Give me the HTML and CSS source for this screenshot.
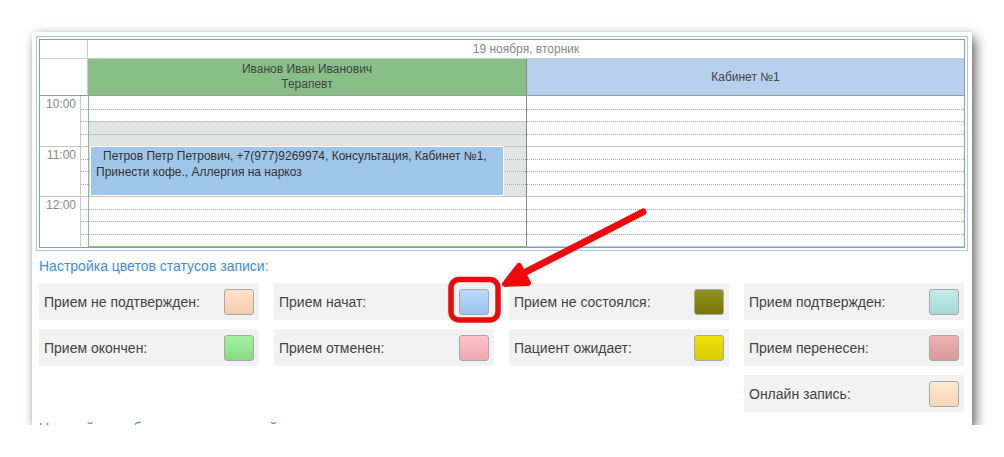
FILE: index.html
```html
<!DOCTYPE html>
<html lang="ru">
<head>
<meta charset="utf-8">
<title>Расписание</title>
<link rel="stylesheet" href="styles.css">
</head>
<body>
<div class="card">
  <div class="frame">
    <div class="sched">
      <div class="date-row">
        <div class="corner"></div>
        <div class="date">19 ноября, вторник</div>
      </div>
      <div class="head-row">
        <div class="corner"></div>
        <div class="head doctor">Иванов Иван Иванович<br>Терапевт</div>
        <div class="head room">Кабинет №1</div>
      </div>
      <div class="body-row">
        <div class="timecol">
          <div class="labels">
            <div class="hour">10:00</div>
            <div class="hour">11:00</div>
            <div class="hour">12:00</div>
          </div>
          <div class="ticks">
            <div class="slot"></div><div class="slot"></div><div class="slot"></div><div class="slot"></div>
            <div class="slot"></div><div class="slot"></div><div class="slot"></div><div class="slot"></div>
            <div class="slot"></div><div class="slot"></div><div class="slot"></div><div class="slot"></div>
          </div>
        </div>
        <div class="col doctor-col">
          <div class="slot"></div><div class="slot"></div><div class="slot busy"></div><div class="slot busy"></div>
          <div class="slot busy"></div><div class="slot busy"></div><div class="slot busy"></div><div class="slot busy"></div>
          <div class="slot"></div><div class="slot"></div><div class="slot"></div><div class="slot"></div>
          <div class="event"><span class="event-first">Петров Петр Петрович, +7(977)9269974, Консультация, Кабинет №1,</span><br>Принести кофе., Аллергия на наркоз</div>
        </div>
        <div class="col room-col">
          <div class="slot"></div><div class="slot"></div><div class="slot"></div><div class="slot"></div>
          <div class="slot"></div><div class="slot"></div><div class="slot"></div><div class="slot"></div>
          <div class="slot"></div><div class="slot"></div><div class="slot"></div><div class="slot"></div>
        </div>
      </div>
    </div>
  </div>
  <div class="settings">
    <div class="settings-title">Настройка цветов статусов записи:</div>
    <div class="status-grid">
      <div class="status"><span>Прием не подтвержден:</span><span class="swatch sw-unconfirmed"></span></div>
      <div class="status"><span>Прием начат:</span><span class="swatch sw-started"></span></div>
      <div class="status"><span>Прием не состоялся:</span><span class="swatch sw-missed"></span></div>
      <div class="status"><span>Прием подтвержден:</span><span class="swatch sw-confirmed"></span></div>
      <div class="status"><span>Прием окончен:</span><span class="swatch sw-finished"></span></div>
      <div class="status"><span>Прием отменен:</span><span class="swatch sw-cancelled"></span></div>
      <div class="status"><span>Пациент ожидает:</span><span class="swatch sw-waiting"></span></div>
      <div class="status"><span>Прием перенесен:</span><span class="swatch sw-moved"></span></div>
      <div class="status online"><span>Онлайн запись:</span><span class="swatch sw-online"></span></div>
    </div>
    <div class="settings-title next">Настройка отображения расписаний:</div>
  </div>
</div>
<svg class="annot" width="1004" height="457" viewBox="0 0 1004 457" xmlns="http://www.w3.org/2000/svg">
  <rect x="451" y="279.5" width="47" height="40.5" rx="8" ry="8" fill="none" stroke="#ee0a0a" stroke-width="5.5"/>
  <line x1="643" y1="212" x2="512" y2="279" stroke="#ee0a0a" stroke-width="7" stroke-linecap="round"/>
  <polygon points="519,266 505,284 528,283" fill="#ee0a0a" stroke="#ee0a0a" stroke-width="6" stroke-linejoin="round"/>
</svg>
</body>
</html>
```

FILE: styles.css
```css
html, body {
  margin: 0;
  padding: 0;
  background: #ffffff;
}

body {
  font-family: "Liberation Sans", Arial, sans-serif;
  color: #444444;
}

.card {
  margin: 32px 0 0 32px;
  width: 940px;
  height: 393px;
  box-sizing: border-box;
  padding: 4px 4px 0;
  background: #ffffff;
  overflow: hidden;
  box-shadow: 4px 6px 11px rgba(0, 0, 0, 0.55), 0 0 6px rgba(0, 0, 0, 0.12);
}

.frame {
  border: 1px solid #a9cdf0;
  padding: 2px;
}

.sched {
  border: 1px solid #999999;
  font-size: 12px;
}

.date-row {
  display: flex;
  height: 19px;
  box-sizing: border-box;
  border-bottom: 1px solid #cccccc;
}

.corner {
  width: 48px;
  flex: none;
  box-sizing: border-box;
  border-right: 1px solid #cccccc;
}

.date {
  flex: 1;
  text-align: center;
  line-height: 18px;
  color: #888888;
}

.head-row {
  display: flex;
  height: 37px;
  box-sizing: border-box;
  border-bottom: 1px solid #999999;
}

.head {
  text-align: center;
  color: #444444;
}

.doctor {
  width: 439px;
  flex: none;
  box-sizing: border-box;
  border-right: 1px solid #888888;
  background: #88bf87;
  line-height: 15px;
  padding-top: 3px;
}

.room {
  flex: 1;
  background: #b6d0ee;
  line-height: 36px;
}

.body-row {
  display: flex;
  height: 151px;
}

.timecol {
  width: 48px;
  flex: none;
  display: flex;
}

.labels {
  width: 41px;
  box-sizing: border-box;
  border-right: 1px solid #cccccc;
}

.hour {
  height: 50px;
  box-sizing: border-box;
  text-align: right;
  padding: 1px 4px 0 0;
  line-height: 14px;
  color: #888888;
}

.hour + .hour {
  border-top: 1px solid #c4c4c4;
}

.hour:last-child {
  height: 51px;
}

.ticks {
  width: 7px;
}

.slot {
  height: 12.5px;
  box-sizing: border-box;
}

.slot + .slot {
  border-top: 1px dotted #aaaaaa;
}

.slot:nth-child(5),
.slot:nth-child(9) {
  border-top: 1px solid #c4c4c4;
}

.col {
  position: relative;
  box-sizing: border-box;
}

.doctor-col {
  width: 439px;
  flex: none;
  border-left: 1px solid #88bf87;
  border-right: 1px solid #888888;
  border-bottom: 1px solid #88bf87;
}

.room-col {
  flex: 1;
  border-bottom: 1px solid #b6d0ee;
}

.busy {
  background: #e1e4e2;
}

.event {
  position: absolute;
  left: 1px;
  top: 50px;
  width: 414px;
  height: 50px;
  box-sizing: border-box;
  border: 1px solid #ffffff;
  background: #9fc5e8;
  padding: 1px 5px 0;
  line-height: 16px;
  color: #333333;
  white-space: nowrap;
}

.event-first {
  padding-left: 7px;
}

.settings {
  padding: 0 3px;
}

.settings-title {
  margin: 5px 0 7px;
  line-height: 20px;
  font-size: 14px;
  color: #3d8ee0;
  white-space: nowrap;
}

.settings-title.next {
  margin-top: 6px;
}

.status-grid {
  display: grid;
  grid-template-columns: repeat(4, 220px);
  column-gap: 15px;
  row-gap: 9px;
}

.status {
  height: 37px;
  box-sizing: border-box;
  padding: 0 5px;
  background: #f2f2f2;
  display: flex;
  align-items: center;
  justify-content: space-between;
  font-size: 14px;
  color: #444444;
}

.status.online {
  grid-column: 4;
}

.swatch {
  width: 30px;
  height: 26px;
  box-sizing: border-box;
  border: 1px solid #a8a8a8;
  border-radius: 3px;
  margin-top: 1px;
}

.sw-unconfirmed { background: linear-gradient(#fee2c8, #f6cdac); }
.sw-started     { background: linear-gradient(#b8dafc, #9dc2ec); }
.sw-missed      { background: linear-gradient(#939322, #767600); }
.sw-confirmed   { background: linear-gradient(#c4ecec, #a7d7d7); }
.sw-finished    { background: linear-gradient(#a4f2a4, #84dc84); }
.sw-cancelled   { background: linear-gradient(#ffc3cb, #f0a8b1); }
.sw-waiting     { background: linear-gradient(#eee20a, #d9cb00); }
.sw-moved       { background: linear-gradient(#eeb4b4, #d89999); }
.sw-online      { background: linear-gradient(#ffe9d2, #f6d6b7); }

.annot {
  position: absolute;
  left: 0;
  top: 0;
  pointer-events: none;
}
```
